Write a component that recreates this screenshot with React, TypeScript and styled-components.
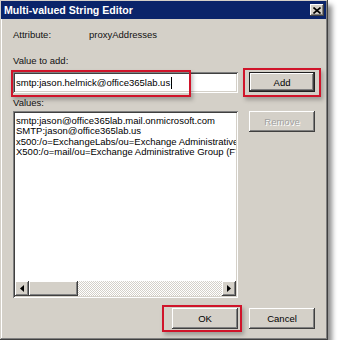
import React from 'react';
import styled, { createGlobalStyle } from 'styled-components';

const GlobalStyle = createGlobalStyle`
  html, body {
    margin: 0;
    padding: 0;
    background: #fff;
  }
  body {
    font-family: "Liberation Sans", Arial, sans-serif;
  }
`;

const raised = `
  box-shadow: inset -1px -1px #404040, inset 1px 1px #fff, inset -2px -2px #808080, inset 2px 2px #d4d0c8;
`;

const Window = styled.div`
  width: 328px;
  height: 340px;
  box-sizing: border-box;
  background: #d4d0c8;
  display: flex;
  flex-direction: column;
  box-shadow: inset -1px -1px #404040, inset 1px 1px #d4d0c8, inset -2px -2px #808080, inset 2px 2px #fff,
    4px 5px 5px rgba(0, 0, 0, 0.45);
`;

const TitleBar = styled.div`
  height: 18px;
  margin: 1px 2px 0 1px;
  background: #0a246a;
  display: flex;
  align-items: center;
  justify-content: space-between;
  padding: 0 2px 0 3px;
`;

const Title = styled.span`
  color: #fff;
  font-weight: bold;
  font-size: 10.6px;
  letter-spacing: 0;
`;

const CloseButton = styled.div`
  width: 14px;
  height: 12px;
  background: #d4d0c8;
  ${raised}
  display: flex;
  align-items: center;
  justify-content: center;
`;

const Body = styled.div`
  flex: 1;
  display: flex;
  flex-direction: column;
  padding: 10px 13px 11px 13px;
  font-size: 9.5px;
  color: #111;
`;

const AttrRow = styled.div`
  display: grid;
  grid-template-columns: 76px 1fr;
  line-height: 12px;
`;

const Label = styled.div<{ $top: number }>`
  line-height: 12px;
  margin-top: ${p => p.$top}px;
`;

const Row = styled.div<{ $top: number }>`
  display: flex;
  align-items: flex-start;
  gap: 11px;
  margin-top: ${p => p.$top}px;
`;

const Field = styled.div`
  position: relative;
  width: 225px;
  height: 21px;
  box-sizing: border-box;
  background: #fff;
  box-shadow: inset 1px 1px #808080, inset -1px -1px #fff, inset 2px 2px #404040, inset -2px -2px #d4d0c8;
  display: flex;
  align-items: center;
  padding-left: 3px;
  font-size: 9.5px;
  color: #000;
`;

const Caret = styled.span`
  display: inline-block;
  width: 1px;
  height: 12px;
  background: #000;
  margin-left: 1px;
`;

const Button = styled.div<{ $default?: boolean; $disabled?: boolean }>`
  position: relative;
  width: 66px;
  height: ${p => (p.$default ? 20 : 21)}px;
  box-sizing: border-box;
  background: #d4d0c8;
  display: flex;
  align-items: center;
  justify-content: center;
  font-size: 9.5px;
  color: ${p => (p.$disabled ? '#a0a0a0' : '#000')};
  text-shadow: ${p => (p.$disabled ? '1px 1px #fff' : 'none')};
  ${raised}
  border: ${p => (p.$default ? '1px solid #202020' : 'none')};
`;

const Highlight = styled.span<{ $inset: string }>`
  position: absolute;
  inset: ${p => p.$inset};
  border: 2px solid #d0142a;
  box-shadow: 2px 3px 4px rgba(0, 0, 0, 0.25);
  pointer-events: none;
`;

const ListBox = styled.div`
  width: 225px;
  height: 187px;
  box-sizing: border-box;
  background: #fff;
  box-shadow: inset 1px 1px #808080, inset -1px -1px #fff, inset 2px 2px #404040, inset -2px -2px #d4d0c8;
  padding: 2px;
  display: flex;
  flex-direction: column;
`;

const Items = styled.div`
  flex: 1;
  overflow: hidden;
  padding: 3px 0 0 1px;
  line-height: 10.4px;
  font-size: 9.5px;
  color: #000;
  white-space: nowrap;
`;

const ScrollBar = styled.div`
  height: 15px;
  display: flex;
`;

const ScrollButton = styled.div<{ $w: number }>`
  width: ${p => p.$w}px;
  height: 15px;
  box-sizing: border-box;
  background: #d4d0c8;
  ${raised}
  display: flex;
  align-items: center;
  justify-content: center;
`;

const Track = styled.div`
  flex: 1;
  background-color: #fff;
  background-image: conic-gradient(#d4d0c8 25%, transparent 0 50%, #d4d0c8 0 75%, transparent 0);
  background-size: 2px 2px;
`;

const SideColumn = styled.div`
  display: flex;
  flex-direction: column;
`;

const Footer = styled.div`
  display: flex;
  justify-content: flex-end;
  gap: 11px;
  margin-top: 10px;
`;

const values = [
  'smtp:jason@office365lab.mail.onmicrosoft.com',
  'SMTP:jason@office365lab.us',
  'x500:/o=ExchangeLabs/ou=Exchange Administrative Group (FYDIBOHF23SPDLT)',
  'X500:/o=mail/ou=Exchange Administrative Group (FYDIBOHF23SPDLT)',
];

const Arrow = ({ dir }: { dir: 'left' | 'right' }) => (
  <svg width="4" height="7" viewBox="0 0 4 7">
    {dir === 'left' ? <path d="M4 0 L0 3.5 L4 7 Z" fill="#000" /> : <path d="M0 0 L4 3.5 L0 7 Z" fill="#000" />}
  </svg>
);

export default function App() {
  return (
    <>
      <GlobalStyle />
      <Window>
        <TitleBar>
          <Title>Multi-valued String Editor</Title>
          <CloseButton>
            <svg width="8" height="7" viewBox="0 0 8 7">
              <path d="M0.5 0.5 L7.5 6.5 M7.5 0.5 L0.5 6.5" stroke="#000" strokeWidth="1.6" />
            </svg>
          </CloseButton>
        </TitleBar>
        <Body>
          <AttrRow>
            <span>Attribute:</span>
            <span>proxyAddresses</span>
          </AttrRow>
          <Label $top={14}>Value to add:</Label>
          <Row $top={5}>
            <Field>
              smtp:jason.helmick@office365lab.us
              <Caret />
              <Highlight $inset="-2px auto -4px -2px" style={{ width: 176 }} />
            </Field>
            <Button $default>
              Add
              <Highlight $inset="-5px -7px -6px -7px" />
            </Button>
          </Row>
          <Label $top={4}>Values:</Label>
          <Row $top={2}>
            <ListBox>
              <Items>
                {values.map(v => (
                  <div key={v}>{v}</div>
                ))}
              </Items>
              <ScrollBar>
                <ScrollButton $w={14}>
                  <Arrow dir="left" />
                </ScrollButton>
                <ScrollButton $w={49} />
                <Track />
                <ScrollButton $w={14}>
                  <Arrow dir="right" />
                </ScrollButton>
              </ScrollBar>
            </ListBox>
            <SideColumn>
              <Button $disabled>Remove</Button>
            </SideColumn>
          </Row>
          <Footer>
            <Button>
              OK
              <Highlight $inset="-3px -4px -3px -10px" />
            </Button>
            <Button>Cancel</Button>
          </Footer>
        </Body>
      </Window>
    </>
  );
}
